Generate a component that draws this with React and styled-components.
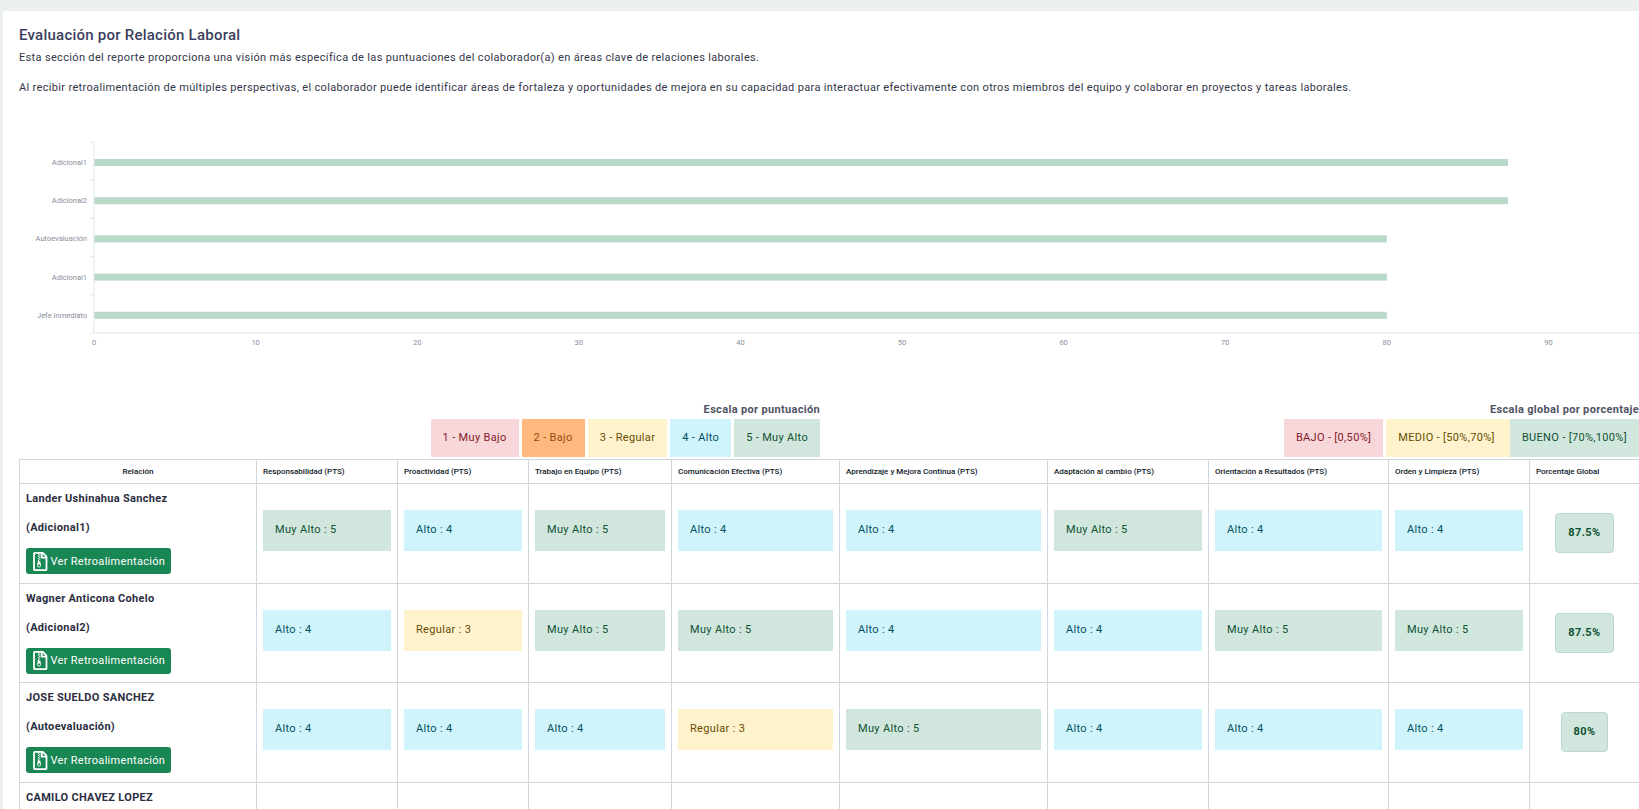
import React from "react"
import styled, { createGlobalStyle } from "styled-components"
import { FaRegFileArchive } from "react-icons/fa"

const GlobalStyle = createGlobalStyle`
  html, body {
    background: #ebeff0;
    height: 809px;
    margin: 0;
    overflow: hidden;
  }

  body {
    color: #3b3f5c;
    font-family: Roboto, "Liberation Sans", sans-serif;
  }
`

const tones = {
  danger: { bg: "#f8d7da", fg: "#842029", line: "#f5c2c7" },
  orange: { bg: "#ffb97f", fg: "#984c0c", line: "#ffb97f" },
  warning: { bg: "#fff3cd", fg: "#664d03", line: "#ffecb5" },
  info: { bg: "#cff4fc", fg: "#055160", line: "#b6effb" },
  success: { bg: "#d1e7dd", fg: "#0f5132", line: "#badbcc" },
}

const Page = styled.div`
  padding: 11px 0 0 3px;
`

const Card = styled.section`
  background: #fff;
  border-top-left-radius: 3px;
  padding: 14px 0 0 16px;
`

const Title = styled.h2`
  color: #3b3f5c;
  font-size: 15px;
  font-weight: 500;
  letter-spacing: 0.24px;
  line-height: 20px;
  margin: 0 0 4px;
`

const Intro = styled.p`
  color: #33364a;
  font-size: 11px;
  letter-spacing: 0.335px;
  line-height: 18px;
  margin: 0 0 12px;
`

const ChartSvg = styled.svg`
  display: block;
  margin: 33px 0 51px;
  overflow: visible;

  text {
    fill: #8a8d9c;
    font-family: Roboto, "Liberation Sans", sans-serif;
    font-size: 7.5px;
  }
`

const Scales = styled.div`
  display: flex;
  height: 58px;
`

const ScaleGroup = styled.div`
  flex: ${(p) => (p.$grow ? "1" : "0 0 801px")};
  text-align: right;
`

const ScaleTitle = styled.div`
  color: #515365;
  font-size: 11px;
  font-weight: 700;
  letter-spacing: 0.33px;
  line-height: 18px;
`

const ScaleRow = styled.div`
  display: flex;
  gap: ${(p) => p.$gap};
  justify-content: flex-end;
`

const ScaleChip = styled.div`
  background: ${(p) => tones[p.$tone].bg};
  color: ${(p) => tones[p.$tone].fg};
  font-size: 11px;
  letter-spacing: 0.33px;
  line-height: 38px;
  margin-left: ${(p) => p.$gapLeft || 0};
  padding: 0 ${(p) => p.$padRight || "12px"} 0 12px;
  white-space: nowrap;
`

const Table = styled.table`
  border-collapse: collapse;
  table-layout: fixed;
  width: 1620px;
`

const HeadCell = styled.th`
  border: 1px solid #d3d5dd;
  color: #0e1726;
  font-size: 8px;
  font-weight: 500;
  height: 23px;
  padding: 0 6px;
  text-align: ${(p) => (p.$center ? "center" : "left")};
  white-space: nowrap;
`

const Row = styled.tr`
  height: 99.6px;
`

const NameCell = styled.td`
  border: 1px solid #d3d5dd;
  padding: 6px 6px 0;
  vertical-align: top;
`

const NameLine = styled.p`
  color: #2b2e3f;
  font-size: 11px;
  font-weight: 700;
  letter-spacing: 0.3px;
  line-height: 18px;
  margin: 0 0 11px;
`

const FeedbackButton = styled.button`
  align-items: center;
  background: #198754;
  border: 0;
  border-radius: 3px;
  color: #fff;
  display: flex;
  font-family: inherit;
  font-size: 11px;
  gap: 3px;
  height: 26px;
  letter-spacing: 0.3px;
  padding: 0 0 0 7px;
  white-space: nowrap;
  width: 145px;

  svg {
    height: 19px;
    width: 14.5px;
  }
`

const ScoreCell = styled.td`
  border: 1px solid #d3d5dd;
  padding: 0 6px 5px;
  vertical-align: middle;
`

const ScoreBadge = styled.div`
  background: ${(p) => tones[p.$tone].bg};
  color: ${(p) => tones[p.$tone].fg};
  font-size: 11px;
  height: 41px;
  letter-spacing: 0.33px;
  line-height: 40px;
  padding-left: 12px;
`

const TotalCell = styled.td`
  border: 1px solid #d3d5dd;
  padding: 0;
  text-align: center;
  vertical-align: middle;
`

const TotalPill = styled.span`
  background: ${tones.success.bg};
  border: 1px solid ${tones.success.line};
  border-radius: 4px;
  color: ${tones.success.fg};
  display: inline-block;
  font-size: 11px;
  font-weight: 700;
  letter-spacing: 0.4px;
  line-height: 38px;
  padding: 0 12px;
`

const columns = [237, 141, 131, 143, 168, 208, 161, 180, 141, 110]

const headers = [
  "Relación",
  "Responsabilidad (PTS)",
  "Proactividad (PTS)",
  "Trabajo en Equipo (PTS)",
  "Comunicación Efectiva (PTS)",
  "Aprendizaje y Mejora Continua (PTS)",
  "Adaptación al cambio (PTS)",
  "Orientación a Resultados (PTS)",
  "Orden y Limpieza (PTS)",
  "Porcentaje Global",
]

const levels = {
  3: { label: "Regular", tone: "warning" },
  4: { label: "Alto", tone: "info" },
  5: { label: "Muy Alto", tone: "success" },
}

const rows = [
  {
    name: "Lander Ushinahua Sanchez",
    relation: "(Adicional1)",
    scores: [5, 4, 5, 4, 4, 5, 4, 4],
    total: "87.5%",
  },
  {
    name: "Wagner Anticona Cohelo",
    relation: "(Adicional2)",
    scores: [4, 3, 5, 5, 4, 4, 5, 5],
    total: "87.5%",
  },
  {
    name: "JOSE SUELDO SANCHEZ",
    relation: "(Autoevaluación)",
    scores: [4, 4, 4, 3, 5, 4, 4, 4],
    total: "80%",
  },
  { name: "CAMILO CHAVEZ LOPEZ", scores: [] },
]

const chartBars = [
  { label: "Adicional1", value: 87.5 },
  { label: "Adicional2", value: 87.5 },
  { label: "Autoevaluación", value: 80 },
  { label: "Adicional1", value: 80 },
  { label: "Jefe Inmediato", value: 80 },
]

const AXIS = "#e0e6ed"
const X0 = 75
const UNIT = 16.16
const TOP = 12
const BAND = 38.2

const BarChart = () => (
  <ChartSvg width="1620" height="220">
    {chartBars.map((bar, i) => (
      <g key={i}>
        <line x1={X0 - 4} x2={X0} y1={TOP + i * BAND} y2={TOP + i * BAND} stroke={AXIS} />
        <rect x={X0} y={TOP + i * BAND + 17} width={bar.value * UNIT} height="7" fill="#b8d8c8" />
        <text x={X0 - 7} y={TOP + i * BAND + 23} textAnchor="end">
          {bar.label}
        </text>
      </g>
    ))}
    <line x1={X0} x2={X0} y1={TOP} y2={203} stroke={AXIS} />
    <line x1={X0 - 4} x2="1620" y1="203" y2="203" stroke={AXIS} />
    {[0, 10, 20, 30, 40, 50, 60, 70, 80, 90].map((tick) => (
      <text key={tick} x={X0 + tick * UNIT} y="215" textAnchor="middle">
        {tick}
      </text>
    ))}
  </ChartSvg>
)

const App = () => (
  <>
    <GlobalStyle />
    <Page>
      <Card>
        <Title>Evaluación por Relación Laboral</Title>
        <Intro>
          Esta sección del reporte proporciona una visión más específica de las puntuaciones del
          colaborador(a) en áreas clave de relaciones laborales.
        </Intro>
        <Intro>
          Al recibir retroalimentación de múltiples perspectivas, el colaborador puede identificar
          áreas de fortaleza y oportunidades de mejora en su capacidad para interactuar
          efectivamente con otros miembros del equipo y colaborar en proyectos y tareas laborales.
        </Intro>
        <BarChart />
        <Scales>
          <ScaleGroup>
            <ScaleTitle>Escala por puntuación</ScaleTitle>
            <ScaleRow $gap="3px">
              <ScaleChip $tone="danger">1 - Muy Bajo</ScaleChip>
              <ScaleChip $tone="orange">2 - Bajo</ScaleChip>
              <ScaleChip $tone="warning">3 - Regular</ScaleChip>
              <ScaleChip $tone="info">4 - Alto</ScaleChip>
              <ScaleChip $tone="success">5 - Muy Alto</ScaleChip>
            </ScaleRow>
          </ScaleGroup>
          <ScaleGroup $grow>
            <ScaleTitle>Escala global por porcentaje</ScaleTitle>
            <ScaleRow>
              <ScaleChip $tone="danger">BAJO - [0,50%]</ScaleChip>
              <ScaleChip $tone="warning" $gapLeft="3px" $padRight="15px">
                MEDIO - [50%,70%]
              </ScaleChip>
              <ScaleChip $tone="success">BUENO - [70%,100%]</ScaleChip>
            </ScaleRow>
          </ScaleGroup>
        </Scales>
        <Table>
          <colgroup>
            {columns.map((width, i) => (
              <col key={i} width={width} />
            ))}
          </colgroup>
          <thead>
            <tr>
              {headers.map((header, i) => (
                <HeadCell key={header} $center={i === 0}>
                  {header}
                </HeadCell>
              ))}
            </tr>
          </thead>
          <tbody>
            {rows.map((row) => (
              <Row key={row.name}>
                <NameCell>
                  <NameLine>{row.name}</NameLine>
                  {row.relation && (
                    <>
                      <NameLine>{row.relation}</NameLine>
                      <FeedbackButton>
                        <FaRegFileArchive />
                        Ver Retroalimentación
                      </FeedbackButton>
                    </>
                  )}
                </NameCell>
                {columns.slice(1, -1).map((_, i) => {
                  const level = levels[row.scores[i]]
                  return (
                    <ScoreCell key={i}>
                      {level && (
                        <ScoreBadge $tone={level.tone}>
                          {level.label} : {row.scores[i]}
                        </ScoreBadge>
                      )}
                    </ScoreCell>
                  )
                })}
                <TotalCell>{row.total && <TotalPill>{row.total}</TotalPill>}</TotalCell>
              </Row>
            ))}
          </tbody>
        </Table>
      </Card>
    </Page>
  </>
)

export default App
